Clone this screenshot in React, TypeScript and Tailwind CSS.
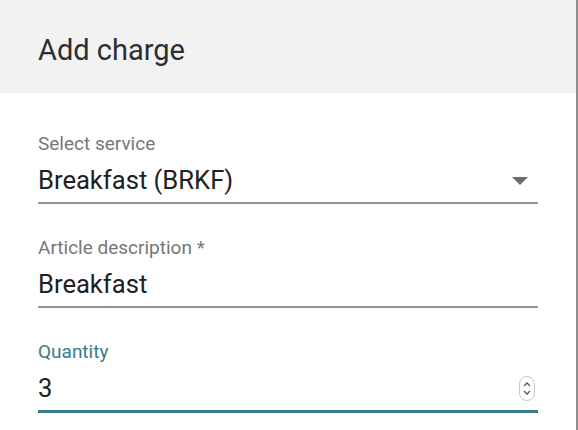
import React from "react";

const font = { fontFamily: "Roboto, 'Noto Sans', sans-serif" };

export default function App() {
  return (
    <div className="flex h-[430px] w-[578px] bg-white" style={font}>
      <div className="flex-1 flex flex-col">
        {/* Header */}
        <div className="h-[93px] bg-[#f2f2f2] pl-[38px] pt-[33px]">
          <h2 className="text-[29px] leading-[34px] text-[#2c2e35]">
            Add charge
          </h2>
        </div>

        {/* Form */}
        <div className="px-[38px] pt-[40px] flex flex-col gap-[33px]">
          <Field label="Select service" value="Breakfast (BRKF)" trailing={<Caret />} />
          <Field label="Article description *" value="Breakfast" />
          <Field label="Quantity" value="3" focused trailing={<Spinner />} />
        </div>
      </div>
      <div className="w-[2px] bg-[#8f8f8f]" />
    </div>
  );
}

function Field({
  label,
  value,
  trailing,
  focused,
}: {
  label: string;
  value: string;
  trailing?: React.ReactNode;
  focused?: boolean;
}) {
  return (
    <div>
      <p
        className={`text-[19px] leading-[22px] ${
          focused ? "text-[#377d89]" : "text-[#777777]"
        }`}
      >
        {label}
      </p>
      <div
        className={`mt-[10px] pb-[7px] flex items-center justify-between ${
          focused ? "border-b-[3px] border-[#377d89]" : "border-b-2 border-[#949494]"
        }`}
      >
        <span className="text-[25.6px] leading-[30px] text-[#212121]">{value}</span>
        {trailing}
      </div>
    </div>
  );
}

function Caret() {
  return (
    <svg width="16" height="8" viewBox="0 0 16 8" className="mr-[10px] mt-[2px]">
      <path d="M0 0h16L8 8z" fill="#6b6b6b" />
    </svg>
  );
}

function Spinner() {
  return (
    <div className="mr-[3px] flex h-[25px] w-[16px] flex-col items-center justify-center gap-[3px] rounded-full border border-[#c8c8c8]">
      <svg width="8" height="5" viewBox="0 0 8 5">
        <path d="M1 4l3-3 3 3" stroke="#555" strokeWidth="1.3" fill="none" />
      </svg>
      <svg width="8" height="5" viewBox="0 0 8 5">
        <path d="M1 1l3 3 3-3" stroke="#555" strokeWidth="1.3" fill="none" />
      </svg>
    </div>
  );
}
